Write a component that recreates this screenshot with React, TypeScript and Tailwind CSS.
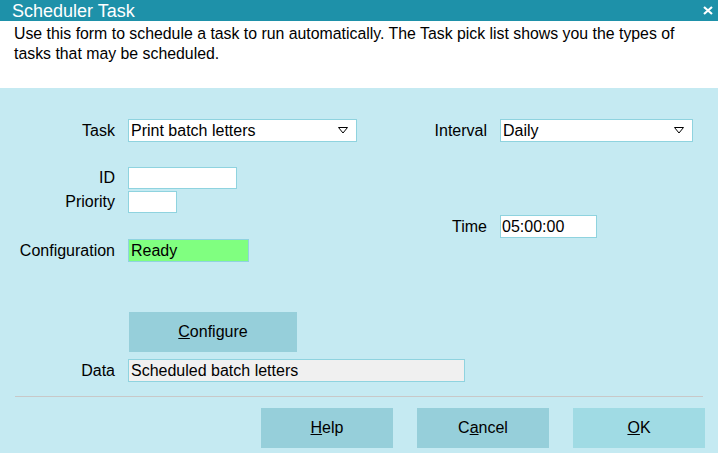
import type { ReactNode } from 'react'

const font = "font-['Liberation_Sans',Arial,sans-serif]"

function Arrow() {
  return (
    <svg width="10" height="7" viewBox="0 0 10 7" className="shrink-0">
      <path d="M0.5 0.5 H9.5 L5 6 Z" fill="none" stroke="#000" strokeWidth="1" />
    </svg>
  )
}

function Row({ label, labelWidth, children, className = '' }: { label: string; labelWidth: string; children: ReactNode; className?: string }) {
  return (
    <div className={`flex items-center gap-[13px] ${className}`}>
      <span className={`${labelWidth} text-right`}>{label}</span>
      {children}
    </div>
  )
}

function Button({ children, className = '' }: { children: ReactNode; className?: string }) {
  return (
    <button className={`h-10 flex items-center justify-center text-[16px] text-black ${className}`}>
      {children}
    </button>
  )
}

export default function App() {
  return (
    <div className={`w-[718px] h-[453px] flex flex-col bg-[#c5eaf2] text-[16px] leading-[18px] text-black overflow-hidden ${font}`}>
      {/* Title bar */}
      <div className="h-[21px] bg-[#1e91a9] flex items-center justify-between pl-3 pr-[5px] text-white">
        <span className="text-[18px] leading-none">Scheduler Task</span>
        <svg width="10" height="9" viewBox="0 0 10 9">
          <path d="M1 1 L9 8 M9 1 L1 8" stroke="#fff" strokeWidth="2.2" />
        </svg>
      </div>

      {/* Description */}
      <div className="h-[67px] bg-white px-[14px] pt-[3px] text-[15.85px] leading-[20px]">
        Use this form to schedule a task to run automatically. The Task pick list shows you the types of tasks that may be scheduled.
      </div>

      {/* Form */}
      <div className="flex pt-[31px]">
        <div className="w-[420px] flex flex-col">
          <Row label="Task" labelWidth="w-[115px]">
            <div className="w-[229px] h-[23px] bg-white border border-[#8fd3df] flex items-center justify-between pl-[2px] pr-[8px]">
              <span>Print batch letters</span>
              <Arrow />
            </div>
          </Row>
          <Row label="ID" labelWidth="w-[115px]" className="mt-[25px]">
            <div className="w-[109px] h-[22px] bg-white border border-[#8fd3df]" />
          </Row>
          <Row label="Priority" labelWidth="w-[115px]" className="mt-[2px]">
            <div className="w-[49px] h-[22px] bg-white border border-[#8fd3df]" />
          </Row>
          <Row label="Configuration" labelWidth="w-[115px]" className="mt-[26px]">
            <div className="w-[121px] h-[23px] bg-[#80ff80] border border-[#8fd3df] flex items-center pl-[2px]">
              Ready
            </div>
          </Row>
        </div>
        <div className="flex flex-col">
          <Row label="Interval" labelWidth="w-[67px]">
            <div className="w-[193px] h-[23px] bg-white border border-[#8fd3df] flex items-center justify-between pl-[2px] pr-[8px]">
              <span>Daily</span>
              <Arrow />
            </div>
          </Row>
          <Row label="Time" labelWidth="w-[67px]" className="mt-[73px]">
            <div className="w-[97px] h-[23px] bg-white border border-[#8fd3df] flex items-center pl-[1px]">
              05:00:00
            </div>
          </Row>
        </div>
      </div>

      <div className="pl-[129px] mt-[50px]">
        <Button className="w-[168px] bg-[#96cfda]">
          <span><u>C</u>onfigure</span>
        </Button>
      </div>

      <Row label="Data" labelWidth="w-[115px]" className="mt-[7px]">
        <div className="w-[337px] h-[23px] bg-[#f0f0f0] border border-[#8fd3df] flex items-center pl-[2px]">
          Scheduled batch letters
        </div>
      </Row>

      <div className="mx-[15px] mt-[14px] h-px bg-[#c8c8c8]" />

      <div className="flex justify-end gap-6 pr-[13px] mt-[11px]">
        <Button className="w-[132px] bg-[#96cfda]">
          <span><u>H</u>elp</span>
        </Button>
        <Button className="w-[132px] bg-[#96cfda]">
          <span>C<u>a</u>ncel</span>
        </Button>
        <Button className="w-[132px] bg-[#a0dbe4]">
          <span><u>O</u>K</span>
        </Button>
      </div>
    </div>
  )
}
